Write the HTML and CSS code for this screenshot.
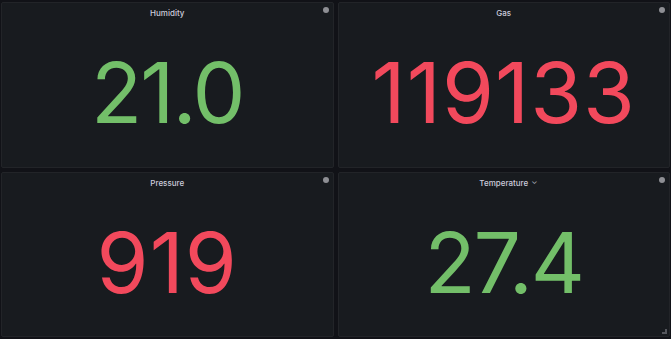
FILE: index.html
```html
<!DOCTYPE html>
<html>
<head lang="en">
	<meta charset="UTF-8">
	<title>Sensors</title>
	<link rel="stylesheet" href="styles.css">
</head>
<body>
	<div id="grid">
		<div class="panel">
			<div class="head"><span class="title">Humidity</span><span class="dot"></span></div>
			<div class="value green tight">21.0</div>
		</div>
		<div class="panel">
			<div class="head"><span class="title">Gas</span><span class="dot"></span></div>
			<div class="value red">119133</div>
		</div>
		<div class="panel">
			<div class="head"><span class="title">Pressure</span><span class="dot"></span></div>
			<div class="value red">919</div>
		</div>
		<div class="panel">
			<div class="head"><span class="title">Temperature<span class="chev">&#8964;</span></span><span class="dot"></span></div>
			<div class="value green tight">27.4</div>
			<span class="resize"></span>
		</div>
	</div>
</body>
</html>
```

FILE: styles.css
```css
*{
	margin: 0;
	padding: 0;
	box-sizing: border-box;
}
html,body{
	height: 100%;
}
body{
	background: #111217;
	font-family: Inter, "Noto Sans", sans-serif;
	overflow: hidden;
}
#grid{
	height: 100%;
	display: grid;
	grid-template-columns: 1fr 1fr;
	grid-template-rows: 1fr 1fr;
	gap: 4px;
	padding: 2px 1px 2px 1px;
}
.panel{
	position: relative;
	background: #181b1f;
	border: 1px solid #222428;
	border-radius: 2px;
	display: flex;
	flex-direction: column;
}
.head{
	height: 20px;
	display: flex;
	align-items: center;
	justify-content: center;
}
.title{
	position: relative;
	font-size: 8px;
	font-weight: 500;
	color: #ccccdc;
}
.chev{
	position: absolute;
	left: 100%;
	top: -2px;
	margin-left: 3px;
	font-size: 8px;
	color: #9fa1ab;
}
.dot{
	position: absolute;
	top: 4px;
	right: 4px;
	width: 6px;
	height: 6px;
	border-radius: 50%;
	background: #8e8f94;
}
.value{
	flex: 1;
	display: flex;
	align-items: center;
	justify-content: center;
	font-size: 84px;
	font-weight: 400;
	letter-spacing: 1px;
	padding-bottom: 4px;
}
.value.tight{
	letter-spacing: -2px;
}
.green{
	color: #73bf69;
}
.red{
	color: #f2495c;
}
.resize{
	position: absolute;
	right: 2px;
	bottom: 2px;
	width: 5px;
	height: 5px;
	border-right: 2px solid #55575d;
	border-bottom: 2px solid #55575d;
}
```
